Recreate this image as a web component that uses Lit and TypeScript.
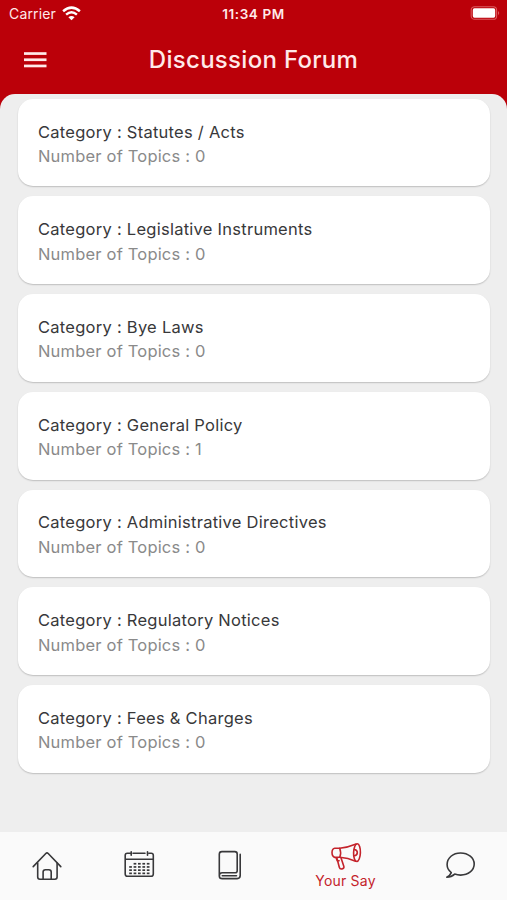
import { LitElement, html, svg, css } from "lit";
import { customElement, property } from "lit/decorators.js";

interface Category {
  name: string;
  topics: number;
}

const CATEGORIES: Category[] = [
  { name: "Statutes / Acts", topics: 0 },
  { name: "Legislative Instruments", topics: 0 },
  { name: "Bye Laws", topics: 0 },
  { name: "General Policy", topics: 1 },
  { name: "Administrative Directives", topics: 0 },
  { name: "Regulatory Notices", topics: 0 },
  { name: "Fees & Charges", topics: 0 },
];

@customElement("status-bar")
export class StatusBar extends LitElement {
  static styles = css`
    :host {
      display: grid;
      grid-template-columns: 1fr auto 1fr;
      align-items: center;
      height: 27px;
      padding: 0 6px 0 9px;
      color: #ffe9e9;
      font-size: 14px;
    }
    .carrier {
      display: flex;
      align-items: center;
      gap: 6px;
      letter-spacing: 0.15px;
    }
    .time {
      margin-right: 3px;
      font-weight: 600;
      font-size: 13.5px;
      letter-spacing: 0.6px;
    }
    .battery {
      justify-self: end;
    }
    svg {
      display: block;
    }
  `;
  render() {
    return html`
      <div class="carrier">
        <span>Carrier</span>
        <svg width="19" height="15" viewBox="0 0 19 15">
          <g fill="none" stroke="#fff" stroke-width="2.5">
            <path d="M1.1 5.2Q9.5 -1.9 17.9 5.2" />
            <path d="M4.1 8.6Q9.5 4 14.9 8.6" />
          </g>
          <path d="M6.4 11.2Q9.5 8.7 12.6 11.2L9.5 14.3Z" fill="#fff" />
        </svg>
      </div>
      <div class="time">11:34 PM</div>
      <svg class="battery" width="31" height="15" viewBox="0 0 31 15">
        <rect x="1.2" y="0.7" width="25.4" height="12.6" rx="3.4" fill="none" stroke="#dc5a5f" stroke-width="1.1" />
        <rect x="2.8" y="2.3" width="22.4" height="9.4" rx="1.6" fill="#fff" />
        <path d="M28 5Q30.4 7 28 9.2Z" fill="#dc5a5f" />
      </svg>
    `;
  }
}

@customElement("category-card")
export class CategoryCard extends LitElement {
  @property() name = "";
  @property({ type: Number }) topics = 0;

  static styles = css`
    :host {
      display: block;
      box-sizing: border-box;
      height: 87.7px;
      padding: 20.8px 20px 0;
      border-radius: 15px;
      background: #fff;
      box-shadow: 0 1px 1.5px rgba(0, 0, 0, 0.2);
      font-size: 16.5px;
      line-height: 24.5px;
      white-space: nowrap;
    }
    .name {
      color: #38383a;
      letter-spacing: 0.26px;
    }
    .topics {
      color: #8a8a8a;
      letter-spacing: 0.19px;
    }
  `;
  render() {
    return html`
      <div class="name">Category : ${this.name}</div>
      <div class="topics">Number of Topics : ${this.topics}</div>
    `;
  }
}

const dots = [0, 1, 2, 3].map((row) =>
  [0, 1, 2, 3, 4]
    .filter((col) => !(row === 0 && col === 0))
    .map((col) => svg`<rect x=${5.2 + col * 4.4} y=${11.9 + row * 3.2} width="2.7" height="1.7" />`)
);

@customElement("tab-bar")
export class TabBar extends LitElement {
  static styles = css`
    :host {
      display: grid;
      grid-template-columns: 93px 91px 92px 139px 89px;
      height: 68px;
      background: #fafafa;
      color: #38383a;
    }
    .tab {
      display: flex;
      flex-direction: column;
      align-items: center;
      padding-top: 17px;
    }
    .active {
      padding-top: 10px;
      color: #c4232b;
      font-size: 14px;
      line-height: 18px;
      letter-spacing: 0.2px;
    }
    svg {
      display: block;
      fill: none;
      stroke: currentColor;
      stroke-width: 1.6;
      stroke-linecap: round;
      stroke-linejoin: round;
    }
    .dots {
      fill: currentColor;
      stroke: none;
    }
  `;
  render() {
    return html`
      <div class="tab">
        <svg width="32" height="34" viewBox="0 0 32 34">
          <path d="M2.2 17.6L14.8 4.5Q16 3.3 17.2 4.5L29.8 17.6" />
          <path d="M6.7 14V28Q6.7 30.2 8.9 30.2H23.9Q26.1 30.2 26.1 28V14" />
          <path d="M12.1 30V23Q12.1 20.7 14.4 20.7H17.9Q20.2 20.7 20.2 23V30" />
        </svg>
      </div>
      <div class="tab">
        <svg width="32" height="34" viewBox="0 0 32 34">
          <g transform="translate(1 2)">
            <path d="M6 2.2H3.3Q1.2 2.2 1.2 4.3V23Q1.2 25.3 3.5 25.3H27Q29.3 25.3 29.3 23V4.3Q29.3 2.2 27.2 2.2H25M9 2.2H21M1.4 8.2H29.1M7.2 .7V4.3M23.5 .7V4.3" />
            <g class="dots">${dots}</g>
          </g>
        </svg>
      </div>
      <div class="tab">
        <svg width="32" height="34" viewBox="0 0 32 34">
          <path d="M5.3 26.9V5.2Q5.3 2.6 7.9 2.6H20.8Q23.2 2.6 23.2 5V21.8Q23.2 23.8 21.2 23.8H8.3Q5.3 23.8 5.3 26.9Q5.3 29.6 8.3 29.6H23.2Q26.2 29.6 26.2 26.6V5.4" />
          <path d="M8.3 26.7H22.5" />
        </svg>
      </div>
      <div class="tab active">
        <svg width="32" height="30" viewBox="0 0 32 30">
          <path d="M9.7 6.2H4.8Q2.1 6.5 2 10.6Q2.1 14.8 4.8 15.4L9.8 15.3Q11.5 10.5 9.7 6.2Z" />
          <path d="M9.7 6.2Q18 5.6 26.2 2.1M9.8 15.3Q18 16 25.6 19.2" />
          <ellipse cx="27" cy="10.6" rx="3.4" ry="8.9" transform="rotate(2 27 10.6)" />
          <path d="M24.6 7.5Q27.5 8.2 27.3 10.8Q27 13.3 24.3 13.7" />
          <path d="M6.8 15.8L9.3 25.2Q9.9 27.4 12 26.9Q14.5 26.4 13.8 24.3L10.9 15.6M6.1 15.7L7.2 18.8H9.1" />
        </svg>
        <span>Your Say</span>
      </div>
      <div class="tab">
        <svg width="32" height="34" viewBox="0 0 32 34">
          <path d="M7.3 23.6Q3.1 20.6 3.1 15.6C3.1 8.8 9 4 16.6 4S30.2 8.8 30.2 15.1S24.3 26.1 16.6 26.1Q13.4 26.1 10.7 25.1Q7.4 28.1 2.8 28.2Q6.2 26.5 7.3 23.6Z" />
        </svg>
      </div>
    `;
  }
}

@customElement("app-root")
export class AppRoot extends LitElement {
  static styles = css`
    :host {
      display: flex;
      flex-direction: column;
      height: 900px;
      overflow: hidden;
      background: #bb0009;
      font-family: Inter, "Liberation Sans", sans-serif;
    }
    .header {
      display: grid;
      grid-template-columns: 70px 1fr 70px;
      align-items: center;
      flex: none;
      height: 66.5px;
      color: #ffe9e9;
    }
    .menu {
      display: block;
      margin-left: 24px;
      fill: #ffe9e9;
    }
    .title {
      margin: 0;
      padding-bottom: 1px;
      text-align: center;
      font-size: 24px;
      font-weight: 500;
      letter-spacing: 0.3px;
    }
    .list {
      flex: 1;
      display: flex;
      flex-direction: column;
      gap: 10px;
      padding: 5.3px 17px 0 18px;
      border-radius: 15px 15px 0 0;
      background: #eee;
    }
  `;
  render() {
    return html`
      <status-bar></status-bar>
      <header class="header">
        <svg class="menu" width="23" height="16" viewBox="0 0 23 16">
          <rect y="0.2" width="22.5" height="2.7" />
          <rect y="6.4" width="22.5" height="2.7" />
          <rect y="12.6" width="22.5" height="2.7" />
        </svg>
        <h1 class="title">Discussion Forum</h1>
      </header>
      <main class="list">
        ${CATEGORIES.map((c) => html`<category-card .name=${c.name} .topics=${c.topics}></category-card>`)}
      </main>
      <tab-bar></tab-bar>
    `;
  }
}
